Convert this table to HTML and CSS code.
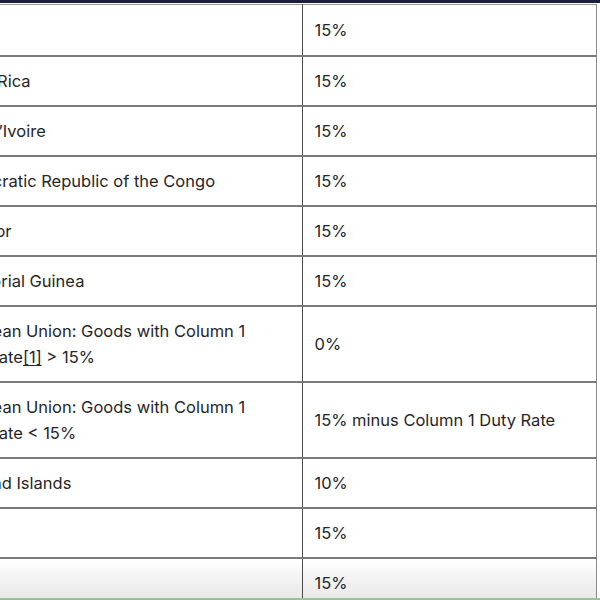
FILE: index.html
```html
<!DOCTYPE html>
<html lang="en">
<head>
<meta charset="utf-8">
<title>Tariff rates</title>
<link rel="stylesheet" href="styles.css">
</head>
<body>
<div class="viewport">
  <div class="topbar"></div>
  <table class="rates">
    <colgroup><col class="c-country"><col class="c-rate"></colgroup>
    <tbody>
      <tr><td class="country">Chad</td><td class="rate">15%</td></tr>
      <tr><td class="country">Costa Rica</td><td class="rate">15%</td></tr>
      <tr><td class="country">Côte d’Ivoire</td><td class="rate">15%</td></tr>
      <tr><td class="country">Democratic Republic of the Congo</td><td class="rate">15%</td></tr>
      <tr><td class="country">Ecuador</td><td class="rate">15%</td></tr>
      <tr><td class="country">Equatorial Guinea</td><td class="rate">15%</td></tr>
      <tr><td class="country">European Union: Goods with Column 1<br>Duty Rate<a class="ref">[1]</a> &gt; 15%</td><td class="rate">0%</td></tr>
      <tr><td class="country">European Union: Goods with Column 1<br>Duty Rate &lt; 15%</td><td class="rate">15% minus Column 1 Duty Rate</td></tr>
      <tr><td class="country">Falkland Islands</td><td class="rate">10%</td></tr>
      <tr><td class="country">Fiji</td><td class="rate">15%</td></tr>
      <tr class="last"><td class="country">Gabon</td><td class="rate">15%</td></tr>
    </tbody>
  </table>
</div>
</body>
</html>
```
FILE: styles.css
```css
html, body {
  margin: 0;
  padding: 0;
  background: #fff;
}
body {
  font-family: Inter, "Noto Sans", sans-serif;
  color: #262628;
  overflow: hidden;
}
.viewport {
  width: 600px;
  height: 598px;
  overflow: hidden;
  border-bottom: 2px solid #9cc29a;
}
.topbar {
  height: 3px;
  background: #1c1f3a;
  border-bottom: 1px solid #fff;
}
.rates {
  border-collapse: collapse;
  table-layout: fixed;
  width: 661px;
  margin-left: -65px;
  border-top: 1px solid #9a9a9a;
  font-size: 16.5px;
  font-weight: 400;
  line-height: 26px;
}
.c-country { width: 367px; }
.c-rate { width: 294px; }
.rates td {
  padding: 11px 12px;
  border-bottom: 2px solid #7a7a7a;
  vertical-align: middle;
  white-space: nowrap;
}
.rates td.country {
  border-right: 1px solid #4a4a4a;
}
.rates td.rate {
  border-right: 1px solid #8a8a8a;
}
.rates tr:first-child td {
  padding-top: 12px;
  padding-bottom: 12px;
}
.ref {
  color: inherit;
  text-decoration: underline;
  text-decoration-thickness: 1px;
  text-underline-offset: 2px;
}
.rates tr.last td {
  background: linear-gradient(#ffffff 0%, #f3f3f3 40%, #e4e4e4 100%);
}
```
